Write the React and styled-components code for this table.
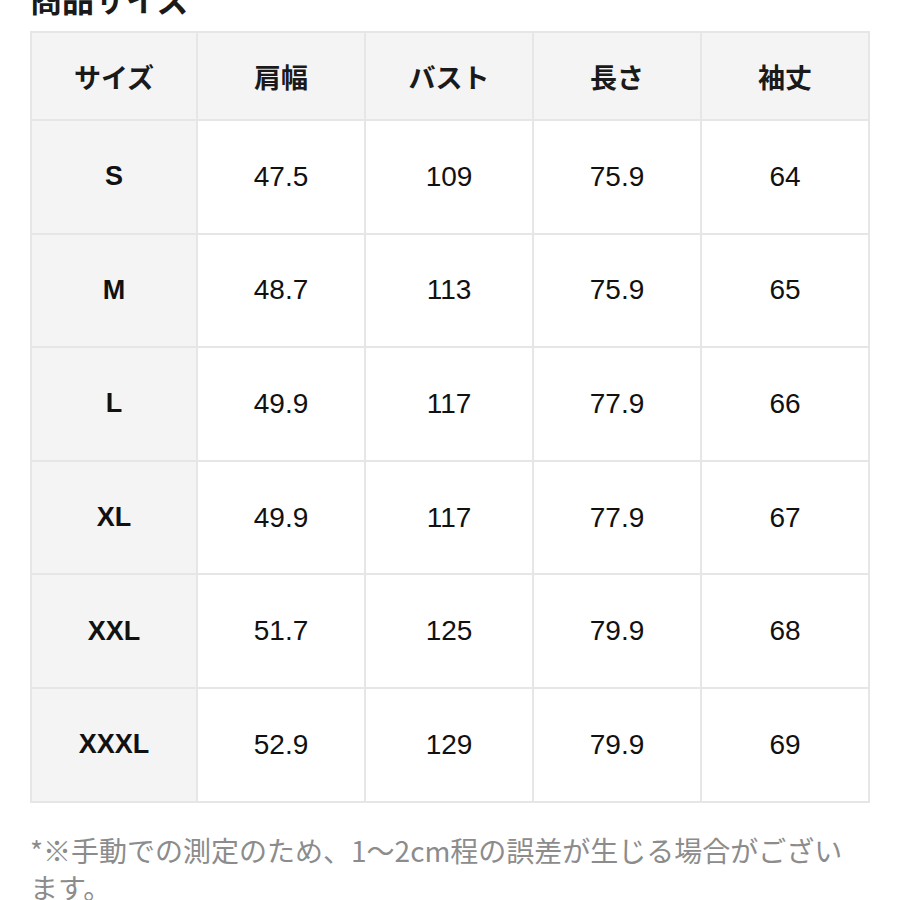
import React from 'react';
import styled, { createGlobalStyle } from 'styled-components';

const GlobalStyle = createGlobalStyle`
  html, body {
    margin: 0;
    padding: 0;
    background: #ffffff;
  }
  body {
    font-family: "Liberation Sans", "Noto Sans CJK JP", sans-serif;
    color: #111;
  }
`;

const Page = styled.div`
  padding: 0 30px;
  overflow: hidden;
  height: 900px;
`;

const Title = styled.h2`
  margin: -18px 0 17px;
  height: 32px;
  line-height: 32px;
  font-size: 32px;
  font-weight: 700;
  font-family: "Noto Sans CJK JP", sans-serif;
  color: #1a1a1a;
`;

const Table = styled.table`
  width: 840px;
  table-layout: fixed;
  border-collapse: collapse;
  border: 2px solid #e6e6e6;
`;

const HeadCell = styled.th`
  width: ${(p) => (p.$first ? '164px' : 'auto')};
  height: 86px;
  background: #f4f4f4;
  border: 2px solid #e6e6e6;
  font-family: "Noto Sans CJK JP", sans-serif;
  font-size: 27px;
  font-weight: 700;
  color: #1a1a1a;
  text-align: center;
  vertical-align: middle;
  padding: 0;
`;

const SizeCell = styled.th`
  height: 111.6px;
  background: #f4f4f4;
  border: 2px solid #e6e6e6;
  font-family: "Liberation Sans", sans-serif;
  font-size: 27px;
  font-weight: 700;
  color: #111;
  text-align: center;
  padding: 0;
`;

const ValueCell = styled.td`
  background: #ffffff;
  border: 2px solid #e6e6e6;
  font-family: "Liberation Sans", sans-serif;
  font-size: 28px;
  color: #111;
  text-align: center;
  padding: 0;
`;

const Note = styled.p`
  margin: 29px 0 0;
  width: 835px;
  font-family: "Noto Sans CJK JP", sans-serif;
  font-size: 28px;
  line-height: 37px;
  color: #8c8c8c;
`;

const headers = ['サイズ', '肩幅', 'バスト', '長さ', '袖丈'];

const rows = [
  ['S', '47.5', '109', '75.9', '64'],
  ['M', '48.7', '113', '75.9', '65'],
  ['L', '49.9', '117', '77.9', '66'],
  ['XL', '49.9', '117', '77.9', '67'],
  ['XXL', '51.7', '125', '79.9', '68'],
  ['XXXL', '52.9', '129', '79.9', '69'],
];

const App = () => {
  return (
    <>
      <GlobalStyle />
      <Page>
        <Title>商品サイズ</Title>
        <Table>
          <thead>
            <tr>
              {headers.map((h, i) => (
                <HeadCell key={h} $first={i === 0}>
                  {h}
                </HeadCell>
              ))}
            </tr>
          </thead>
          <tbody>
            {rows.map(([size, ...values]) => (
              <tr key={size}>
                <SizeCell>{size}</SizeCell>
                {values.map((v, i) => (
                  <ValueCell key={i}>{v}</ValueCell>
                ))}
              </tr>
            ))}
          </tbody>
        </Table>
        <Note>*※手動での測定のため、1〜2cm程の誤差が生じる場合がございます。</Note>
      </Page>
    </>
  );
};

export default App;
